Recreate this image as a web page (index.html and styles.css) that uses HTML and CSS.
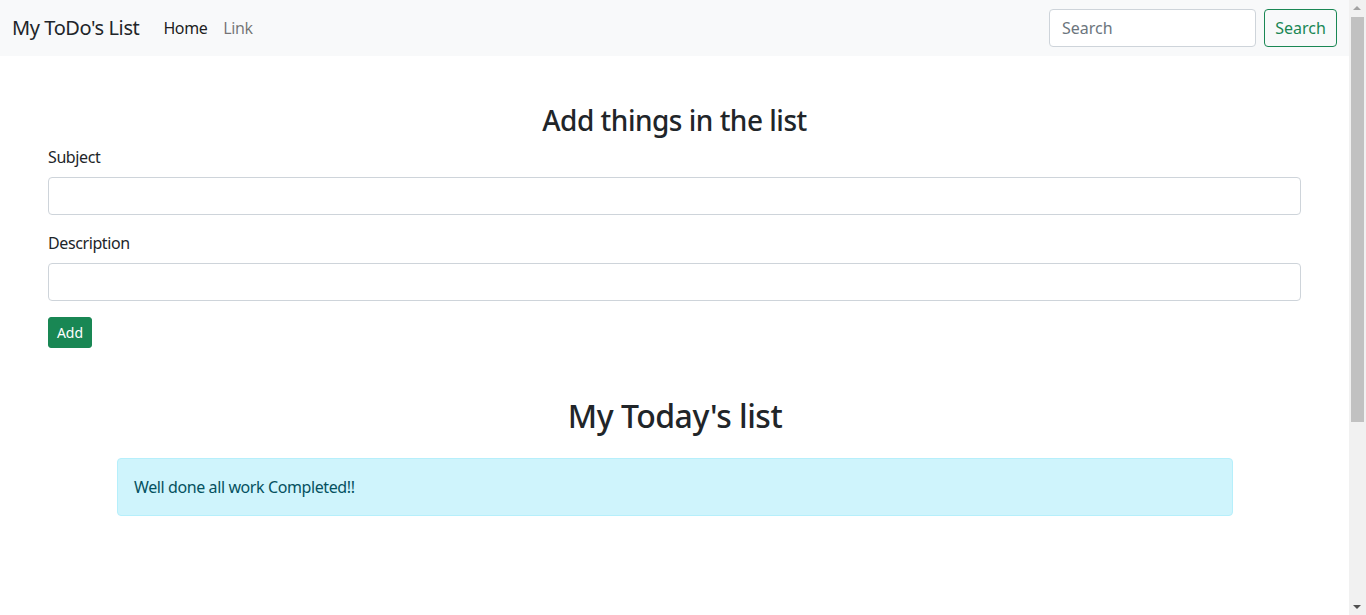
FILE: index.html
```html
<!DOCTYPE html>
<html lang="en">
<head>
<meta charset="utf-8">
<title>My ToDo's List</title>
<link rel="stylesheet" href="styles.css">
</head>
<body>
<nav class="navbar">
  <div class="nav-left">
    <a class="brand" href="#">My ToDo's List</a>
    <ul class="nav-links">
      <li><a class="nav-link active" href="#">Home</a></li>
      <li><a class="nav-link" href="#">Link</a></li>
    </ul>
  </div>
  <form class="search-form">
    <input class="search-input" type="search" placeholder="Search">
    <button class="btn-outline" type="button">Search</button>
  </form>
</nav>
<main class="page">
  <section class="add-section">
    <h3 class="title-add">Add things in the list</h3>
    <form class="todo-form">
      <div class="field">
        <label class="field-label" for="subject">Subject</label>
        <input class="field-input" id="subject" type="text">
      </div>
      <div class="field">
        <label class="field-label" for="desc">Description</label>
        <input class="field-input" id="desc" type="text">
      </div>
      <button class="btn-add" type="button">Add</button>
    </form>
  </section>
  <section class="list-section">
    <h2 class="title-list">My Today's list</h2>
    <div class="alert-info">Well done all work Completed!!</div>
  </section>
</main>
<div class="scrollbar" aria-hidden="true">
  <div class="sb-arrow sb-up"></div>
  <div class="sb-track"><div class="sb-thumb"></div></div>
  <div class="sb-arrow sb-down"></div>
</div>
</body>
</html>
```
FILE: styles.css
```css
* { box-sizing: border-box; }
html, body { margin: 0; padding: 0; }
body {
  font-family: "Noto Sans", "Open Sans", sans-serif;
  font-size: 16px;
  line-height: 1.5;
  letter-spacing: -0.4px;
  color: #212529;
  background: #fff;
  min-height: 908px;
  margin-right: 17px;
}
.navbar {
  height: 56px;
  background: #f8f9fa;
  display: flex;
  align-items: center;
  justify-content: space-between;
  padding: 0 12px;
}
.nav-left { display: flex; align-items: center; }
.brand {
  font-size: 20px;
  color: #212529;
  text-decoration: none;
  margin-right: 16px;
  line-height: 30px;
}
.nav-links { list-style: none; margin: 0; padding: 0; display: flex; }
.nav-link {
  display: block;
  padding: 8px;
  color: rgba(0,0,0,.55);
  text-decoration: none;
}
.nav-link.active { color: rgba(0,0,0,.9); }
.search-form { display: flex; align-items: center; }
.search-input {
  width: 207px;
  height: 38px;
  border: 1px solid #ced4da;
  border-radius: 4px;
  padding: 6px 12px;
  font: inherit;
  color: #212529;
  background: #fff;
  margin-right: 8px;
}
.search-input::placeholder { color: #6c757d; }
.btn-outline {
  height: 38px;
  width: 73px;
  border: 1px solid #198754;
  border-radius: 4px;
  background: transparent;
  color: #198754;
  font: inherit;
  padding: 6px 0;
}
.page { padding: 0 48px; }
.add-section { padding-top: 48px; }
.title-add {
  margin: 0 0 7px;
  font-size: 28px;
  font-weight: 500;
  line-height: 1.2;
  letter-spacing: -0.5px;
  text-align: center;
}
.field { margin-bottom: 16px; }
.field-label { display: block; margin-bottom: 8px; }
.field-input {
  display: block;
  width: 100%;
  height: 38px;
  border: 1px solid #ced4da;
  border-radius: 4px;
  padding: 6px 12px;
  font: inherit;
}
.btn-add {
  height: 31px;
  width: 44px;
  background: #198754;
  border: 1px solid #198754;
  color: #fff;
  border-radius: 3px;
  font: inherit;
  font-size: 14px;
  padding: 0;
}
.list-section { padding: 0 68px 0 69px; margin-top: 49px; }
.title-list {
  margin: 0 0 23px;
  font-size: 32px;
  font-weight: 500;
  line-height: 1.2;
  letter-spacing: -0.5px;
  text-align: center;
}
.alert-info {
  background: #cff4fc;
  border: 1px solid #b6effb;
  color: #055160;
  border-radius: 4px;
  padding: 16px;
}
.scrollbar {
  position: fixed;
  top: 0;
  right: 0;
  width: 17px;
  height: 100vh;
  background: #f1f1f1;
  display: flex;
  flex-direction: column;
}
.sb-arrow { height: 17px; flex: none; position: relative; }
.sb-up::after, .sb-down::after {
  content: "";
  position: absolute;
  left: 4px;
  border-left: 4px solid transparent;
  border-right: 4px solid transparent;
}
.sb-up::after { top: 6px; border-bottom: 4px solid #a3a3a3; }
.sb-down::after { top: 7px; border-top: 4px solid #505050; }
.sb-track { flex: 1; padding: 0 2px; }
.sb-thumb { height: 405px; background: #c1c1c1; }
```
